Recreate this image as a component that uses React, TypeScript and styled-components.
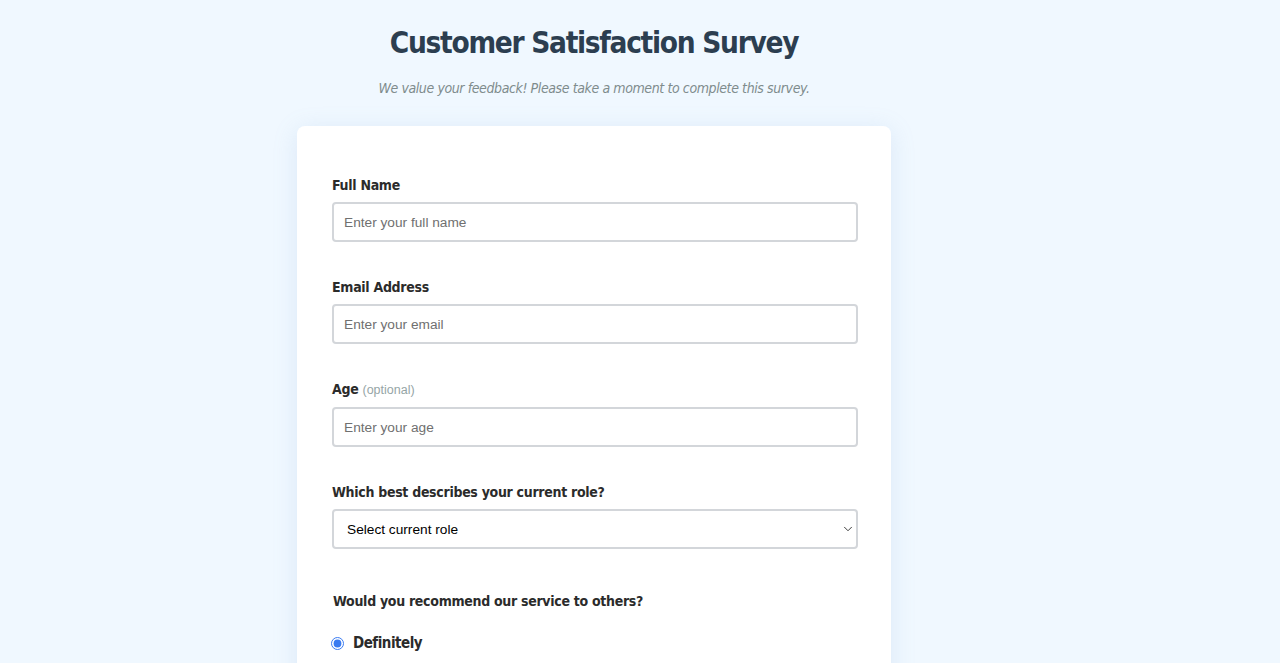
import React, { useState } from 'react';
import styled, { createGlobalStyle } from 'styled-components';
import { ChevronDown } from 'lucide-react';

const GlobalStyle = createGlobalStyle`
  html, body {
    margin: 0;
    padding: 0;
    background: #f0f8ff;
  }
  body {
    font-family: "DejaVu Sans Condensed", "DejaVu Sans", Tahoma, sans-serif;
    color: #333;
  }
`;

const Page = styled.div`
  width: 1188px;
  min-height: 1220px;
  display: flex;
  flex-direction: column;
  align-items: center;
  padding-top: 24px;
  box-sizing: border-box;
`;

const Title = styled.h1`
  margin: 0;
  font-size: 29.5px;
  line-height: 38px;
  font-weight: 700;
  letter-spacing: -1.3px;
  color: #2c3e50;
`;

const Subtitle = styled.p`
  margin: 16px 0 0;
  font-size: 14px;
  line-height: 20px;
  font-style: italic;
  letter-spacing: -0.4px;
  color: #7f8c8d;
`;

const Card = styled.div`
  margin-top: 28px;
  width: 594px;
  box-sizing: border-box;
  background: #fff;
  border-radius: 8px;
  box-shadow: 0 4px 24px rgba(120, 160, 210, 0.18);
  padding: 50px 33px 60px 35px;
`;

const Form = styled.form`
  display: flex;
  flex-direction: column;
`;

const FormGroup = styled.div`
  display: flex;
  flex-direction: column;
  margin-bottom: 36px;
`;

const Label = styled.label`
  font-size: 14px;
  line-height: 18px;
  font-weight: 700;
  letter-spacing: -0.3px;
  color: #2b2b2b;
  margin-bottom: 8px;
`;

const Optional = styled.span`
  font-family: "Liberation Sans", Arial, sans-serif;
  font-weight: 400;
  font-size: 12.5px;
  letter-spacing: 0;
  color: #95a5a6;
`;

const Input = styled.input`
  height: 40px;
  box-sizing: border-box;
  padding: 0 10px;
  border: 2px solid #d3d6da;
  border-radius: 4px;
  font-family: "Liberation Sans", Arial, sans-serif;
  font-size: 13.7px;
  color: #333;
  background: #fff;
  outline: none;

  &::placeholder {
    color: #707070;
  }
`;

const SelectWrap = styled.div`
  position: relative;
  display: flex;
  flex-direction: column;
`;

const Select = styled.select`
  appearance: none;
  height: 40px;
  box-sizing: border-box;
  padding: 0 13px;
  border: 2px solid #d3d6da;
  border-radius: 4px;
  font-family: "Liberation Sans", Arial, sans-serif;
  font-size: 13.7px;
  color: #000;
  background: #fff;
  outline: none;
`;

const Chevron = styled(ChevronDown)`
  position: absolute;
  right: 3px;
  top: 13px;
  color: #222;
  pointer-events: none;
`;

const Fieldset = styled.fieldset`
  border: none;
  margin: 7px 0 0;
  padding: 0;
`;

const Legend = styled.legend`
  padding: 0 0 0 1px;
  font-size: 14px;
  line-height: 18px;
  font-weight: 700;
  letter-spacing: -0.3px;
  color: #2b2b2b;
  margin-bottom: 24px;
`;

const RadioRow = styled.label`
  display: flex;
  align-items: center;
  gap: 9px;
  margin-bottom: 26px;
  font-size: 15px;
  font-weight: 700;
  letter-spacing: -0.5px;
  color: #2b2b2b;
  cursor: pointer;
`;

const Radio = styled.input`
  margin: 0 0 0 -1px;
  width: 13px;
  height: 13px;
  accent-color: #3a7bf0;
`;

const options = ['Definitely', 'Maybe', 'Not sure'];

export default function App() {
  const [recommend, setRecommend] = useState('Definitely');

  return (
    <>
      <GlobalStyle />
      <Page>
        <Title>Customer Satisfaction Survey</Title>
        <Subtitle>We value your feedback! Please take a moment to complete this survey.</Subtitle>
        <Card>
          <Form onSubmit={(e) => e.preventDefault()}>
            <FormGroup>
              <Label htmlFor="name">Full Name</Label>
              <Input id="name" type="text" placeholder="Enter your full name" />
            </FormGroup>
            <FormGroup>
              <Label htmlFor="email">Email Address</Label>
              <Input id="email" type="email" placeholder="Enter your email" />
            </FormGroup>
            <FormGroup>
              <Label htmlFor="age">
                Age <Optional>(optional)</Optional>
              </Label>
              <Input id="age" type="text" placeholder="Enter your age" />
            </FormGroup>
            <FormGroup>
              <Label htmlFor="role">Which best describes your current role?</Label>
              <SelectWrap>
                <Select id="role" defaultValue="">
                  <option value="" disabled>
                    Select current role
                  </option>
                  <option value="student">Student</option>
                  <option value="full-time">Full-time job</option>
                  <option value="other">Other</option>
                </Select>
                <Chevron size={14} strokeWidth={1.5} />
              </SelectWrap>
            </FormGroup>
            <Fieldset>
              <Legend>Would you recommend our service to others?</Legend>
              {options.map((opt) => (
                <RadioRow key={opt}>
                  <Radio
                    type="radio"
                    name="recommend"
                    checked={recommend === opt}
                    onChange={() => setRecommend(opt)}
                  />
                  {opt}
                </RadioRow>
              ))}
            </Fieldset>
          </Form>
        </Card>
      </Page>
    </>
  );
}
